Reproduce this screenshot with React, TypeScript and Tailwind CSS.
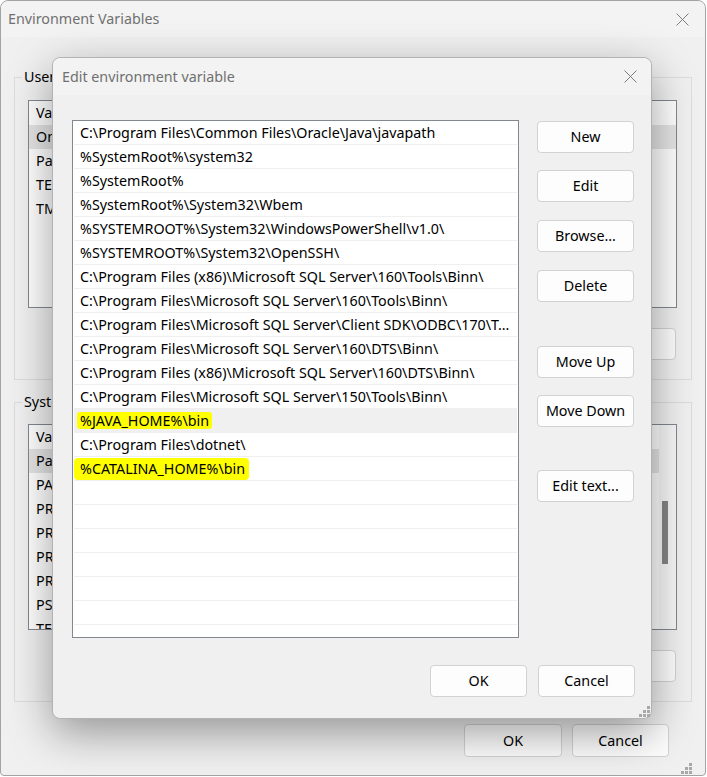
import React from "react";

type Row = { name: string; value: string };

const userVars: Row[] = [
  { name: "OneDrive", value: "C:\\Users\\user\\OneDrive" },
  { name: "Path", value: "C:\\Users\\user\\AppData\\Local\\Microsoft\\WindowsApps;" },
  { name: "TEMP", value: "C:\\Users\\user\\AppData\\Local\\Temp" },
  { name: "TMP", value: "C:\\Users\\user\\AppData\\Local\\Temp" },
];

const systemVars: Row[] = [
  { name: "Path", value: "C:\\Program Files\\Common Files\\Oracle\\Java\\javapath;..." },
  { name: "PATHEXT", value: ".COM;.EXE;.BAT;.CMD;.VBS;.VBE;.JS;.JSE;.WSF;.WSH;.MSC" },
  { name: "PROCESSOR_ARCHITECTURE", value: "AMD64" },
  { name: "PROCESSOR_IDENTIFIER", value: "Intel64 Family 6 Model 154 Stepping 3" },
  { name: "PROCESSOR_LEVEL", value: "6" },
  { name: "PROCESSOR_REVISION", value: "9a03" },
  { name: "PSModulePath", value: "%ProgramFiles%\\WindowsPowerShell\\Modules;" },
  { name: "TEMP", value: "C:\\WINDOWS\\TEMP" },
];

const pathEntries = [
  "C:\\Program Files\\Common Files\\Oracle\\Java\\javapath",
  "%SystemRoot%\\system32",
  "%SystemRoot%",
  "%SystemRoot%\\System32\\Wbem",
  "%SYSTEMROOT%\\System32\\WindowsPowerShell\\v1.0\\",
  "%SYSTEMROOT%\\System32\\OpenSSH\\",
  "C:\\Program Files (x86)\\Microsoft SQL Server\\160\\Tools\\Binn\\",
  "C:\\Program Files\\Microsoft SQL Server\\160\\Tools\\Binn\\",
  "C:\\Program Files\\Microsoft SQL Server\\Client SDK\\ODBC\\170\\Tools\\Binn\\",
  "C:\\Program Files\\Microsoft SQL Server\\160\\DTS\\Binn\\",
  "C:\\Program Files (x86)\\Microsoft SQL Server\\160\\DTS\\Binn\\",
  "C:\\Program Files\\Microsoft SQL Server\\150\\Tools\\Binn\\",
  "%JAVA_HOME%\\bin",
  "C:\\Program Files\\dotnet\\",
  "%CATALINA_HOME%\\bin",
];

const CloseIcon = () => (
  <svg width="13" height="13" viewBox="0 0 13 13">
    <path d="M0.5 0.5L12.5 12.5M12.5 0.5L0.5 12.5" stroke="#7c7c7c" strokeWidth="1" fill="none" />
  </svg>
);

// the little dotted triangle in the corner of a sizable window
const Grip = () => (
  <svg width="11" height="11" viewBox="0 0 11 11">
    {[
      [8, 0],
      [8, 4],
      [4, 4],
      [8, 8],
      [4, 8],
      [0, 8],
    ].map(([x, y]) => (
      <rect key={`${x}-${y}`} x={x} y={y} width="3" height="3" fill="#a8a8a8" />
    ))}
  </svg>
);

const Button = ({ label, className = "" }: { label: string; className?: string }) => (
  <button
    className={`flex h-[32px] w-[97px] shrink-0 items-center justify-center rounded-[4px] border border-[#d2d2d2] bg-[#fdfdfd] text-[14.3px] text-black ${className}`}
  >
    {label}
  </button>
);

const VarList = ({
  rows,
  selected,
  height,
  scrollbar,
}: {
  rows: Row[];
  selected: number;
  height: string;
  scrollbar?: boolean;
}) => (
  <div className={`flex overflow-hidden border border-[#828790] bg-white ${height}`}>
    <div className="flex-1 overflow-hidden">
      <div className="flex h-[24px] items-center text-[14.3px] text-black">
        <span className="w-[180px] pl-[7px]">Variable</span>
        <span>Value</span>
      </div>
      {rows.map((r, i) => (
        <div
          key={r.name + i}
          className={`flex h-[24px] items-center whitespace-nowrap text-[14.3px] text-black ${
            i === selected ? "bg-[#e5e5e5]" : ""
          }`}
        >
          <span className="w-[180px] shrink-0 overflow-hidden pl-[7px]">{r.name}</span>
          <span className="overflow-hidden">{r.value}</span>
        </div>
      ))}
    </div>
    {scrollbar && (
      <div className="flex w-[17px] flex-col bg-[#f7f7f7] pt-[76px]">
        <div className="ml-[3px] h-[63px] w-[6px] bg-[#858585]" />
      </div>
    )}
  </div>
);

const GroupBox = ({
  title,
  rows,
  selected,
  listHeight,
  listTop,
  scrollbar,
  className = "",
}: {
  title: string;
  rows: Row[];
  selected: number;
  listHeight: string;
  listTop: string;
  scrollbar?: boolean;
  className?: string;
}) => (
  <fieldset className={`border border-[#dcdcdc] ${className}`}>
    <legend className="ml-[7px] px-[2px] text-[14.3px] leading-[18px] text-black">{title}</legend>
    <div className={`pl-[13px] pr-[14px] pb-[19px] ${listTop}`}>
      <VarList rows={rows} selected={selected} height={listHeight} scrollbar={scrollbar} />
      <div className="mt-[20px] flex justify-end gap-[10px] pr-[1px]">
        <Button label="New..." />
        <Button label="Edit..." />
        <Button label="Delete" />
      </div>
    </div>
  </fieldset>
);

const EnvironmentWindow = () => (
  <div className="flex h-[776px] w-[706px] flex-col rounded-t-[8px] rounded-b-[4px] border border-[#a3a3a3] bg-[#f0f0f0]">
    <div className="flex h-[36px] shrink-0 items-center justify-between rounded-t-[8px] bg-[#f3f3f3] pl-[7px] pr-[16px]">
      <span className="text-[14.3px] text-[#707070]">Environment Variables</span>
      <CloseIcon />
    </div>
    <div className="flex flex-1 flex-col px-[13px] pt-[31px]">
      <GroupBox title="User variables for user" rows={userVars} selected={0} listHeight="h-[208px]" listTop="pt-[14px]" />
      <GroupBox
        title="System variables"
        rows={systemVars}
        selected={0}
        listHeight="h-[206px]"
        listTop="pt-[13px]"
        scrollbar
        className="mt-[13px]"
      />
      <div className="mt-[22px] flex justify-end gap-[10px] pr-[23px]">
        <Button label="OK" className="h-[33px] w-[98px] bg-[#e6e6e6]" />
        <Button label="Cancel" className="h-[33px] bg-[#e8e8e8]" />
      </div>
      <div className="mt-auto flex justify-end pb-[1px] pr-[0px]">
        <Grip />
      </div>
    </div>
  </div>
);

const EditDialog = () => (
  <div className="absolute left-[52px] top-[57px] flex h-[662px] w-[600px] flex-col rounded-[8px] border border-[#b3b3b3] bg-[#f0f0f0] shadow-[0_14px_44px_rgba(0,0,0,0.38)]">
    <div className="flex h-[37px] shrink-0 items-center justify-between rounded-t-[8px] bg-[#f3f3f3] pl-[9px] pr-[14px]">
      <span className="text-[14.3px] text-[#707070]">Edit environment variable</span>
      <CloseIcon />
    </div>
    <div className="flex gap-[18px] pl-[19px] pt-[25px]">
      <div className="flex h-[518px] w-[447px] shrink-0 flex-col overflow-hidden border border-[#828790] bg-white">
        {Array.from({ length: 22 }).map((_, i) => {
          const text = pathEntries[i];
          const isJava = text === "%JAVA_HOME%\\bin";
          const isCatalina = text === "%CATALINA_HOME%\\bin";
          return (
            <div
              key={i}
              className={`mx-[1px] flex h-[24px] shrink-0 items-center whitespace-nowrap border-b border-[#efefef] pl-[6px] text-[14.3px] text-black ${
                isJava ? "bg-[#f0f0f0]" : ""
              }`}
            >
              {isJava ? (
                <span className="-ml-[3px] rounded-[3px] bg-[#ffff00] px-[3px] leading-[17px]">{text}</span>
              ) : isCatalina ? (
                <span className="-ml-[6px] mt-[1px] rounded-[4px] bg-[#ffff00] py-[2px] pl-[6px] pr-[4px] leading-[18px]">
                  {text}
                </span>
              ) : text && text.length > 60 ? (
                <span className="block w-[437px] overflow-hidden text-ellipsis">{text}</span>
              ) : (
                text
              )}
            </div>
          );
        })}
      </div>
      <div className="flex flex-col pt-[1px]">
        <Button label="New" />
        <Button label="Edit" className="mt-[17px]" />
        <Button label="Browse..." className="mt-[18px]" />
        <Button label="Delete" className="mt-[18px]" />
        <Button label="Move Up" className="mt-[44px]" />
        <Button label="Move Down" className="mt-[17px]" />
        <Button label="Edit text..." className="mt-[43px]" />
      </div>
    </div>
    <div className="mt-[27px] flex justify-end gap-[11px] pr-[16px]">
      <Button label="OK" />
      <Button label="Cancel" />
    </div>
    <div className="mt-auto flex justify-end pb-[1px] pr-[1px]">
      <Grip />
    </div>
  </div>
);

export default function App() {
  return (
    <div className="relative h-[777px] w-[707px] overflow-hidden bg-white font-['Noto_Sans',sans-serif]">
      <EnvironmentWindow />
      <EditDialog />
    </div>
  );
}
